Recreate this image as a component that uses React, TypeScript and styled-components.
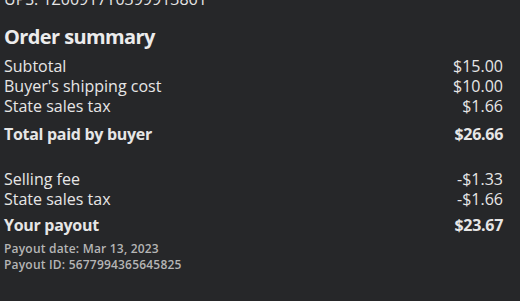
import React from "react";
import styled, { createGlobalStyle } from "styled-components";

const Global = createGlobalStyle`
  html, body { margin: 0; padding: 0; background: #262729; }
  body { font-family: "Open Sans", "Noto Sans", sans-serif; color: #e6e6e6; overflow: hidden; }
`;

const Page = styled.div`
  width: 520px;
  height: 301px;
  box-sizing: border-box;
  padding: 0 17px 0 4px;
  background: #262729;
  overflow: hidden;
`;

const Tracking = styled.div`
  font-size: 16px;
  line-height: 20px;
  margin-top: -11px;
  color: #e6e6e6;
`;

const Heading = styled.h2`
  margin: 16px 0 7px;
  font-size: 20px;
  line-height: 24px;
  font-weight: 700;
  letter-spacing: -0.6px;
  color: #ececec;
`;

const Group = styled.div<{ $gap?: number }>`
  margin-top: ${(p) => p.$gap ?? 0}px;
`;

const Row = styled.div<{ $strong?: boolean; $gap?: number }>`
  display: flex;
  justify-content: space-between;
  font-size: 16px;
  line-height: 20px;
  font-weight: ${(p) => (p.$strong ? 700 : 400)};
  letter-spacing: ${(p) => (p.$strong ? "-0.3px" : "0")};
  margin-top: ${(p) => p.$gap ?? 0}px;
`;

const Note = styled.div<{ $gap?: number }>`
  font-size: 12px;
  line-height: 16px;
  font-weight: 600;
  letter-spacing: 0.2px;
  color: #b5b5b5;
  margin-top: ${(p) => p.$gap ?? 0}px;
`;

export default function App() {
  return (
    <>
      <Global />
      <Page>
        <Tracking>UPS: 1Z00917Y0399913861</Tracking>
        <Heading>Order summary</Heading>
        <Group>
          <Row><span>Subtotal</span><span>$15.00</span></Row>
          <Row><span>Buyer's shipping cost</span><span>$10.00</span></Row>
          <Row><span>State sales tax</span><span>$1.66</span></Row>
          <Row $strong $gap={8}><span>Total paid by buyer</span><span>$26.66</span></Row>
        </Group>
        <Group $gap={25}>
          <Row><span>Selling fee</span><span>-$1.33</span></Row>
          <Row><span>State sales tax</span><span>-$1.66</span></Row>
          <Row $strong $gap={6}><span>Your payout</span><span>$23.67</span></Row>
          <Note $gap={6}>Payout date: Mar 13, 2023</Note>
          <Note>Payout ID: 5677994365645825</Note>
        </Group>
      </Page>
    </>
  );
}
